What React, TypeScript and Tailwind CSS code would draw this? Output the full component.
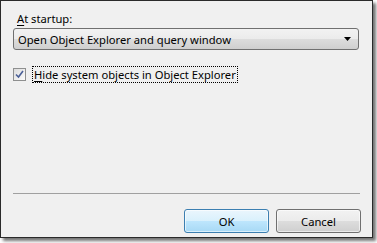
export default function App() {
  return (
    <div className="w-[377px] h-[243px] bg-white">
      <div
        className="flex h-[238px] w-[373px] flex-col border border-[#2a2a2a] bg-[#f0f0f0] pl-3 pr-3 text-[11.2px] leading-[15px] text-black shadow-[3px_3px_3px_rgba(0,0,0,0.55)]"
        style={{ fontFamily: '"Noto Sans", "Liberation Sans", sans-serif' }}
      >
        {/* At startup */}
        <div className="mt-[10px] pl-[4px]">
          <span className="underline underline-offset-2">A</span>t startup:
        </div>
        <div className="mt-[2px] flex h-[22px] w-[346px] items-center justify-between rounded-[3px] border border-[#707070] bg-[linear-gradient(to_bottom,#f2f2f2_0%,#ebebeb_50%,#dddddd_50%,#cfcfcf_100%)] pl-[4px] pr-[4px]">
          <span>Open Object Explorer and query window</span>
          <svg width="9" height="5" viewBox="0 0 9 5" className="mr-[1px]">
            <polygon points="0,0 7,0 3.5,4" fill="#000" />
          </svg>
        </div>

        {/* Hide system objects */}
        <div className="mt-[16px] flex items-center">
          <div className="flex h-[13px] w-[13px] items-center justify-center border border-[#8e8f8f] bg-[linear-gradient(to_bottom_right,#dcdcdc,#fbfbfb)]">
            <svg width="9" height="9" viewBox="0 0 9 9">
              <path d="M1 4.5 L3.5 7 L8 1" fill="none" stroke="#4a5f97" strokeWidth="1.6" />
            </svg>
          </div>
          <div className="ml-[6px] border border-dotted border-black px-[1px]">
            <span className="underline underline-offset-2">H</span>ide system objects in Object Explorer
          </div>
        </div>

        <div className="flex-1" />

        {/* separator */}
        <div className="h-px w-[347px] bg-[#a0a0a0]" />

        {/* buttons */}
        <div className="mt-[15px] mb-[4px] flex w-[348px] justify-end gap-[7px]">
          <button className="h-[24px] w-[85px] rounded-[3px] border border-[#3c7fb1] bg-[linear-gradient(to_bottom,#eaf6fd_0%,#d9f0fc_50%,#bee6fd_50%,#a7d9f5_100%)] shadow-[inset_0_0_0_1px_rgba(255,255,255,0.6)]">
            OK
          </button>
          <button className="h-[24px] w-[85px] rounded-[3px] border border-[#707070] bg-[linear-gradient(to_bottom,#f2f2f2_0%,#ebebeb_50%,#dddddd_50%,#cfcfcf_100%)] shadow-[inset_0_0_0_1px_rgba(255,255,255,0.6)]">
            Cancel
          </button>
        </div>
      </div>
    </div>
  );
}
